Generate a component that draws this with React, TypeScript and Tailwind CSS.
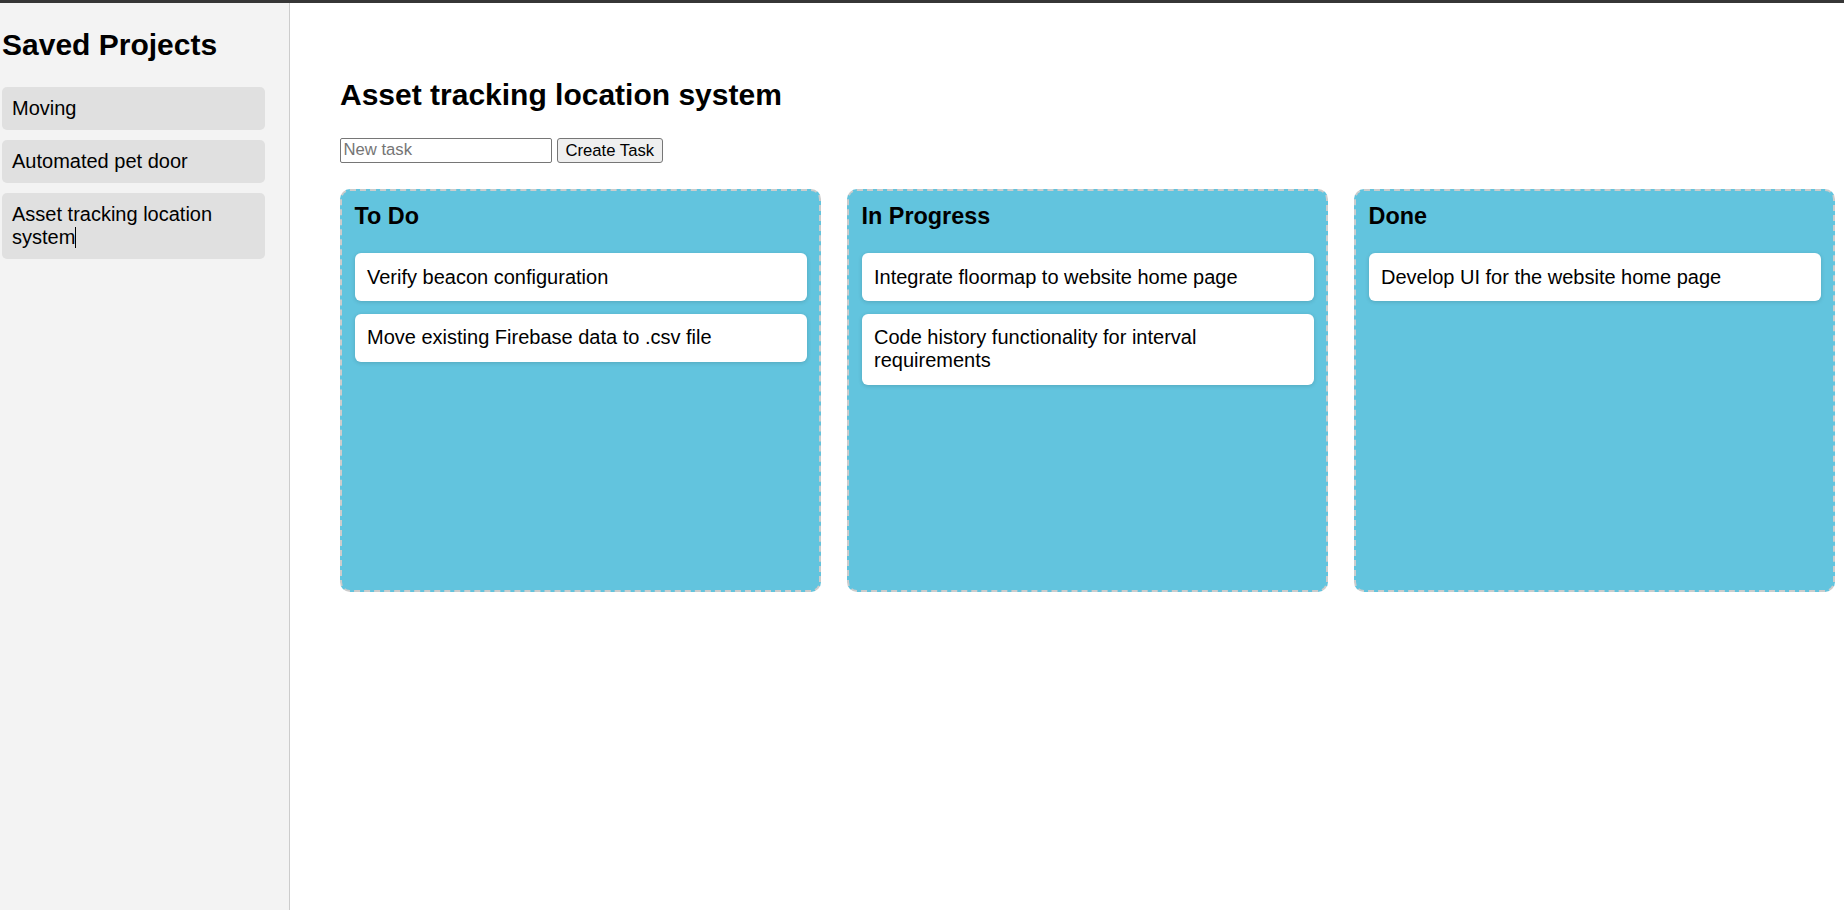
import React from "react";

const columns = [
  { title: "To Do", tasks: ["Verify beacon configuration", "Move existing Firebase data to .csv file"] },
  {
    title: "In Progress",
    tasks: ["Integrate floormap to website home page", "Code history functionality for interval requirements"],
  },
  { title: "Done", tasks: ["Develop UI for the website home page"] },
];

const projects = ["Moving", "Automated pet door", "Asset tracking location system"];

export default function App() {
  return (
    <div
      className="w-[1844px] h-[910px] flex flex-col overflow-hidden bg-white text-black"
      style={{ fontFamily: '"Liberation Sans", Arial, sans-serif' }}
    >
      <div className="h-[3px] bg-[#363636] shrink-0" />
      <div className="flex flex-1 min-h-0">
        <aside className="w-[290px] shrink-0 bg-[#f3f3f3] border-r border-[#cccccc] pl-[2px] pr-[24px]">
          <h2 className="text-[30px] font-bold leading-[34.5px] mt-[24.5px] mb-[24.5px]">Saved Projects</h2>
          <div className="flex flex-col gap-[10px]">
            {projects.map((p, i) => (
              <div
                key={p}
                className="bg-[#e0e0e0] rounded-[5px] px-[10px] py-[10px] text-[20px] leading-[23px]"
              >
                {p}
                {i === projects.length - 1 && (
                  <span className="inline-block w-px h-[21px] bg-black align-[-4px]" />
                )}
              </div>
            ))}
          </div>
        </aside>
        <main className="flex-1 min-w-0 pl-[50px] pt-[50px]">
          <h2 className="text-[30px] font-bold leading-[34.5px] mt-[25px] mb-[25px] whitespace-nowrap">
            Asset tracking location system
          </h2>
          <div className="flex items-center gap-[5px]">
            <input
              placeholder="New task"
              className="w-[212px] h-[25px] border border-[#767676] rounded-[2px] px-[2.5px] text-[16.67px] placeholder:text-[#757575] outline-none"
              style={{ fontFamily: '"Liberation Sans", Arial, sans-serif' }}
            />
            <button
              className="h-[25px] px-[7.5px] border border-[#767676] rounded-[3px] bg-[#efefef] text-[16.67px] leading-[19px]"
              style={{ fontFamily: '"Liberation Sans", Arial, sans-serif' }}
            >
              Create Task
            </button>
          </div>
          <div className="flex gap-[26px] mt-[26px]">
            {columns.map((c) => (
              <div
                key={c.title}
                className="w-[481px] h-[403px] shrink-0 bg-[#62c4de] border-2 border-dashed border-[#cccccc] rounded-[10px] p-[12.5px]"
              >
                <h3 className="text-[23.4px] font-bold leading-[27px] mb-[23.4px]">{c.title}</h3>
                <div className="flex flex-col gap-[12.5px]">
                  {c.tasks.map((t) => (
                    <div
                      key={t}
                      className="bg-white rounded-[6px] px-[12.5px] py-[12.5px] text-[20px] leading-[23px] shadow-[0_1px_4px_rgba(0,0,0,0.15)]"
                    >
                      {t}
                    </div>
                  ))}
                </div>
              </div>
            ))}
          </div>
        </main>
      </div>
    </div>
  );
}
